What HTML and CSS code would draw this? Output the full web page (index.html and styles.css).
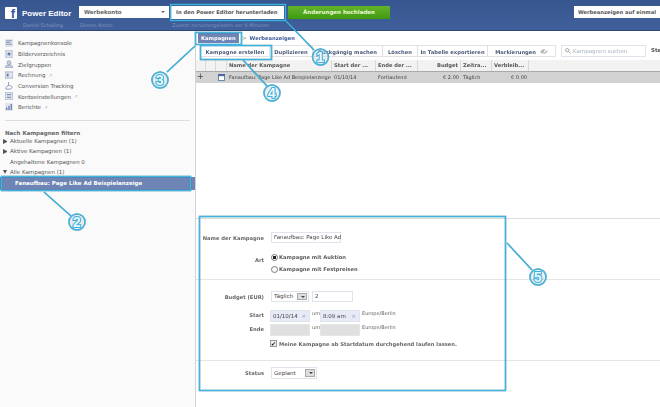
FILE: index.html
```html
<!DOCTYPE html>
<html lang="de">
<head>
  <meta charset="UTF-8" />
  <title>Power Editor</title>
  <link rel="stylesheet" href="styles.css">
</head>
<body>
  <header class="topbar">
    <div class="brand">
      <div class="fb-logo">f</div>
      <div class="brand-text">
        <div class="brand-name">Power Editor</div>
        <div class="top-note">Daniel Schalling</div>
      </div>
    </div>
    <div class="account">
      <div class="account-select">Werbekonto <span class="caret"></span></div>
      <div class="top-note">Dieses Konto</div>
    </div>
    <div class="download">
      <div class="top-btn">In den Power Editor herunterladen</div>
      <div class="top-note">Zuletzt heruntergeladen vor 4 Minuten</div>
    </div>
    <div class="upload-btn">Änderungen hochladen</div>
    <div class="top-btn bulk-btn">Werbeanzeigen auf einmal</div>
  </header>

  <div class="layout">
    <aside class="sidebar">
      <ul class="side-nav">
        <li><svg viewBox="0 0 9 9"><path d="M0 0h9v9H0z" fill="#dfe4ee"/><path d="M1 2h7M1 4h5M1 6h7" stroke="#7f8fae"/></svg>Kampagnenkonsole</li>
        <li><svg viewBox="0 0 9 9"><path d="M1 0h7v9H1z" fill="#dfe4ee" stroke="#93a0bb" stroke-width=".7"/><path d="M3 3h3v3H3z" fill="#5f76a6"/></svg>Bilderverzeichnis</li>
        <li><svg viewBox="0 0 9 9"><circle cx="4.5" cy="3" r="2.2" fill="#c6cfe0" stroke="#7f8fae" stroke-width=".7"/><path d="M0 9c.5-3 2-3.5 4.500-3.500S8.500 6 9 9z" fill="#c6cfe0" stroke="#7f8fae" stroke-width=".7"/></svg>Zielgruppen</li>
        <li><svg viewBox="0 0 9 9"><path d="M0 1h9v7H0z" fill="#dfe4ee" stroke="#8494b3" stroke-width=".7"/><path d="M2 3h2v3H2z" fill="#5f76a6"/></svg>Rechnung <span class="ext">↗</span></li>
        <li><svg viewBox="0 0 9 9"><path d="M4 0v4M1 8c0-3 2-4 4-4s3 1 3 2-2 2-3 2z" fill="none" stroke="#8494b3"/></svg>Conversion Tracking</li>
        <li><svg viewBox="0 0 9 9"><path d="M0 0h9v9H0z" fill="#dfe4ee" stroke="#8494b3" stroke-width=".7"/><path d="M2 3h5M2 6h5" stroke="#5f76a6"/></svg>Kontoeinstellungen <span class="ext">↗</span></li>
        <li><svg viewBox="0 0 9 9"><path d="M0 0h9v9H0z" fill="#dfe4ee"/><path d="M2 5v3M4.500 3v5M7 1v7" stroke="#4f6aa3" stroke-width="1.200"/></svg>Berichte <span class="ext">↗</span></li>
      </ul>

      <h3 class="filter-title">Nach Kampagnen filtern</h3>
      <ul class="filter-tree">
        <li><span class="arrow right"></span>Aktuelle Kampagnen (1)</li>
        <li><span class="arrow right"></span>Aktive Kampagnen (1)</li>
        <li><span class="arrow none"></span>Angehaltene Kampagnen 0</li>
        <li><span class="arrow down"></span>Alle Kampagnen (1)</li>
      </ul>
      <div class="selected-campaign">Fanaufbau: Page Like Ad Beispielanzeige</div>
    </aside>

    <main class="content">
      <nav class="crumbs">
        <span class="crumb-active">Kampagnen</span>
        <span class="crumb-sep">&gt;</span>
        <span class="crumb-link">Werbeanzeigen</span>
      </nav>

      <div class="toolbar">
        <div class="tool-group">
          <span class="tool w-create">Kampagne erstellen</span>
          <span class="tool w-dup">Duplizieren</span>
          <span class="tool w-undo">Rückgängig machen</span>
          <span class="tool w-del">Löschen</span>
          <span class="tool w-export">In Tabelle exportieren</span>
          <span class="tool w-tags">Markierungen
            <svg class="tag-icon" viewBox="0 0 12 7"><path d="M0 4l4-4h4L5 6 3 7zM5 7l5-5 2 1-4 4z" fill="#b9b9b9"/></svg>
          </span>
        </div>
        <div class="search">
          <svg viewBox="0 0 8 8"><circle cx="3" cy="3" r="2.200" fill="none" stroke="#8a8a8a"/><path d="M5 5l2.500 2.500" stroke="#8a8a8a"/></svg>
          Kampagnen suchen
        </div>
        <span class="status-cut">Sta</span>
      </div>

      <div class="table">
        <div class="row head">
          <span class="c c-a"></span><span class="c c-b"></span><span class="c c-c"></span>
          <span class="c c-name">Name der Kampagne</span>
          <span class="c c-start">Start der ...</span>
          <span class="c c-end">Ende der ...</span>
          <span class="c c-budget num">Budget</span>
          <span class="c c-time">Zeitra...</span>
          <span class="c c-left">Verbleib...</span>
        </div>
        <div class="row body">
          <span class="c c-a plus">+</span><span class="c c-b"></span>
          <span class="c c-c"><svg viewBox="0 0 8 8"><path d="M.5.5h7v7h-7z" fill="#fff" stroke="#4f6aa3"/><path d="M0 0h8v2.500H0z" fill="#4f6aa3"/></svg></span>
          <span class="c c-name">Fanaufbau: Page Like Ad Beispielanzeige</span>
          <span class="c c-start">01/10/14</span>
          <span class="c c-end">Fortlaufend</span>
          <span class="c c-budget num">€ 2.00</span>
          <span class="c c-time">Täglich</span>
          <span class="c c-left num">€ 0.00</span>
        </div>
      </div>

      <section class="details">
        <div class="form-block first">
          <div class="field">
            <label class="lbl">Name der Kampagne</label>
            <div class="input name-input">Fanaufbau: Page Like Ad</div>
          </div>
          <div class="field art">
            <label class="lbl">Art</label>
            <div class="radios">
              <div class="radio-row"><span class="radio on"></span>Kampagne mit Auktion</div>
              <div class="radio-row"><span class="radio"></span>Kampagne mit Festpreisen</div>
            </div>
          </div>
        </div>

        <div class="form-block second">
          <div class="field budget">
            <label class="lbl">Budget (EUR)</label>
            <div class="input select-input w-daily">Täglich <span class="sel-btn"></span></div>
            <div class="input budget-input">2</div>
          </div>
          <div class="field date">
            <label class="lbl">Start</label>
            <div class="input date-input">01/10/14 <span class="clear">×</span></div>
            <span class="um">um</span>
            <div class="input date-input">8:09 am <span class="clear">×</span></div>
            <span class="tz">Europe/Berlin</span>
          </div>
          <div class="field date">
            <label class="lbl">Ende</label>
            <div class="input date-input off"></div>
            <span class="um">um</span>
            <div class="input date-input off"></div>
            <span class="tz">Europe/Berlin</span>
          </div>
          <div class="field check">
            <label class="lbl"></label>
            <span class="checkbox">✔</span>
            <span class="check-text">Meine Kampagne ab Startdatum durchgehend laufen lassen.</span>
          </div>
        </div>

        <div class="form-block third">
          <div class="field">
            <label class="lbl">Status</label>
            <div class="input select-input w-status">Geplant <span class="sel-btn"></span></div>
          </div>
        </div>
      </section>
    </main>
  </div>

  <!-- Tutorial callouts drawn over the page -->
  <svg class="callouts" viewBox="0 0 660 407" aria-hidden="true">
    <g class="boxes">
      <rect x="170.500" y="4.500" width="115" height="16"/>
      <rect x="1.500" y="176.500" width="189" height="14"/>
      <rect x="195.500" y="32.500" width="46" height="12"/>
      <rect x="200.500" y="45.500" width="71" height="14"/>
      <rect x="199.500" y="216.500" width="306" height="174"/>
    </g>
    <g class="leaders">
      <path d="M286 21L314 50"/>
      <path d="M44 192L71 216"/>
      <path d="M195 46L167 72"/>
      <path d="M243 60L267 86"/>
      <path d="M507 243L532 270"/>
    </g>
    <g class="badges">
      <circle cx="320.500" cy="57" r="8"/><text x="320.500" y="62">1</text>
      <circle cx="77" cy="222" r="8"/><text x="77" y="227">2</text>
      <circle cx="160" cy="80" r="8"/><text x="160" y="85">3</text>
      <circle cx="272" cy="93" r="8"/><text x="272" y="98">4</text>
      <circle cx="538" cy="277" r="8"/><text x="538" y="282">5</text>
    </g>
  </svg>
</body>
</html>
```

FILE: styles.css
```css
/* Reset and base */
* {
  box-sizing: border-box;
  margin: 0;
  padding: 0;
}
html, body {
  height: 407px;
  overflow: hidden;
}
body {
  position: relative;
  background: #fff;
  color: #444;
  font-family: "DejaVu Sans", Verdana, sans-serif;
  font-size: 5.5px;
  filter: blur(.3px); /* the reference is a scaled down capture */
}
ul {
  list-style: none;
}

/* Blue top bar */
.topbar {
  height: 31px;
  display: flex;
  align-items: flex-start;
  padding: 6px 0 0 5px;
  background: linear-gradient(#37568f, #41609b);
  border-bottom: 1px solid #2c4678;
  overflow: hidden;
  white-space: nowrap;
}
.topbar > * {
  flex: none;
}
.brand {
  display: flex;
  width: 74px;
}
.fb-logo {
  width: 12px;
  height: 12px;
  margin-top: 1px;
  background: #fff;
  color: #3b5998;
  border-radius: 1px;
  font: bold 13px/14px "Liberation Sans", sans-serif;
  text-align: right;
  padding-right: 2px;
}
.brand-text {
  margin-left: 5px;
}
.brand-name {
  color: #fff;
  font: bold 8px/10px "Liberation Sans", sans-serif;
  margin: 3px 0 2px;
}
.top-note {
  color: #7e93bf;
  font-size: 5px;
  line-height: 8px;
  margin-top: 3px;
  padding-left: 1px;
}
.brand-text .top-note {
  margin-top: 1px;
}
.account {
  width: 92px;
}
.account-select {
  width: 90px;
  height: 12px;
  background: #fff;
  color: #666;
  font-weight: bold;
  font-size: 5.5px;
  line-height: 12px;
  padding-left: 5px;
  position: relative;
}
.caret {
  position: absolute;
  right: 4px;
  top: 5px;
  border: 2px solid transparent;
  border-top-color: #666;
}
.top-btn {
  height: 12px;
  background: #fff;
  color: #555;
  font-weight: bold;
  font-size: 5.2px;
  line-height: 12px;
  padding: 0 5px;
}
.download {
  width: 117px;
}
.download .top-btn {
  width: 113px;
  height: 13px;
  line-height: 13px;
}
.download .top-note {
  margin-top: 2px;
}
.upload-btn {
  width: 102px;
  height: 13px;
  background: linear-gradient(#63b32a, #3f9a10);
  color: #e9f8d2;
  font-weight: bold;
  font-size: 5.5px;
  line-height: 13px;
  text-align: center;
}
.bulk-btn {
  margin-left: 184px;
  width: 86px;
  padding: 0 0 0 4px;
}

/* Two columns under the bar */
.layout {
  display: flex;
  height: 376px;
}
.sidebar {
  width: 196px;
  flex: none;
  background: #fafafa;
  border-right: 1px solid #d4d4d4;
  padding-top: 7px;
}
.side-nav {
  margin: 0 5px;
  padding-bottom: 7px;
  border-bottom: 1px solid #dedede;
}
.side-nav li {
  display: flex;
  align-items: center;
  height: 10.7px;
  padding-left: 13px;
  position: relative;
  color: #555;
  white-space: nowrap;
}
.side-nav svg {
  position: absolute;
  left: 0;
  top: 1px;
  width: 8px;
  height: 8px;
}
.ext {
  color: #aaa;
  margin-left: 3px;
  font-size: 4.5px;
}
.filter-title {
  color: #666;
  font-size: 5.5px;
  line-height: 8px;
  margin: 8px 0 0 5px;
}
.filter-tree {
  margin: -1px 0 0 3px;
}
.filter-tree li {
  display: flex;
  align-items: center;
  height: 10.4px;
  color: #555;
}
.arrow {
  width: 7px;
  flex: none;
  height: 5px;
}
.arrow.right {
  width: 4px;
  margin-right: 3px;
  border-left: 4px solid #555;
  border-top: 2.500px solid transparent;
  border-bottom: 2.500px solid transparent;
}
.arrow.down {
  width: 4px;
  margin-right: 3px;
  border-top: 4px solid #555;
  border-left: 2.500px solid transparent;
  border-right: 2.500px solid transparent;
}
.selected-campaign {
  height: 13px;
  background: #6d84b4;
  color: #fff;
  font-weight: bold;
  line-height: 12px;
  padding-left: 15px;
  white-space: nowrap;
}

/* Right side */
.content {
  flex: 1;
  min-width: 0;
  overflow: hidden;
}
.crumbs {
  height: 13px;
  display: flex;
  align-items: center;
  padding-left: 2px;
  white-space: nowrap;
}
.crumb-active {
  background: #6d84b4;
  color: #fff;
  font-weight: bold;
  font-size: 5.2px;
  padding: 0 3px;
  height: 10px;
  line-height: 10px;
  width: 41px;
  white-space: nowrap;
}
.crumb-sep {
  color: #8c8c8c;
  margin: 0 3px;
}
.crumb-link {
  color: #3b5998;
  font-weight: bold;
  font-size: 5.2px;
}
.toolbar {
  display: flex;
  align-items: flex-start;
  height: 16px;
  margin-left: 4px;
  padding-top: 1px;
  white-space: nowrap;
}
.tool-group {
  display: flex;
  flex: none;
}
.tool {
  height: 12px;
  line-height: 12px;
  text-align: center;
  color: #4c5a78;
  font-weight: bold;
  font-size: 5.2px;
  border: 1px solid #e2e2e2;
  border-left: none;
  background: #fff;
  display: block;
}
.w-create { width: 70px; border-left: 1px solid #e2e2e2; }
.w-dup { width: 43px; }
.w-undo { width: 70px; }
.w-del { width: 35px; }
.w-export { width: 70px; }
.w-tags { width: 68px; }
.tag-icon {
  width: 8px;
  height: 5px;
  margin-left: 2px;
}
.search {
  width: 85px;
  height: 12px;
  margin: 0 0 0 5px;
  border: 1px solid #dfe3ec;
  color: #a7b0c0;
  line-height: 10px;
  padding-left: 3px;
  flex: none;
  display: flex;
  align-items: center;
  gap: 2px;
}
.search svg {
  width: 6px;
  height: 6px;
}
.status-cut {
  margin-left: 5px;
  font-weight: bold;
  color: #555;
  line-height: 10px;
}

/* Table */
.table {
  margin-bottom: 135px;
}
.row {
  display: flex;
  white-space: nowrap;
}
.row.head {
  height: 12px;
  background: #f2f2f2;
  border-bottom: 1px solid #a9a9a9;
  font-weight: bold;
  color: #555;
  line-height: 11px;
  font-size: 5.2px;
}
.row.head .c {
  border-right: 1px solid #d9d9d9;
}
.row.body {
  height: 11px;
  background: #d2d2d2;
  line-height: 10px;
  color: #444;
  font-size: 5px;
}
.c {
  padding: 0 2px;
  overflow: hidden;
  flex: none;
}
.c-a { width: 10px; }
.c-b { width: 10px; }
.c-c { width: 11px; }
.c-name { width: 105px; }
.c-start { width: 44px; }
.c-end { width: 42px; }
.c-budget { width: 43px; }
.c-time { width: 31px; }
.c-left { width: 37px; }
.num { text-align: right; }
.plus {
  font-size: 8px;
  padding: 0 1px;
  line-height: 10px;
}
.c-c svg {
  width: 7px;
  height: 7px;
  margin-top: 2px;
  display: block;
}

/* Detail form */
.details {
  border-top: 1px solid #dedede;
}
.form-block {
  border-bottom: 1px solid #e4e4e4;
}
.form-block.first {
  height: 61px;
  padding-top: 13px;
}
.form-block.second {
  height: 81px;
  padding-top: 11px;
}
.form-block.third {
  border-bottom: none;
  padding-top: 6px;
}
.field {
  display: flex;
  align-items: center;
  min-height: 11px;
  margin-bottom: 4px;
  white-space: nowrap;
}
.lbl {
  width: 68px;
  flex: none;
  margin-right: 7px;
  text-align: right;
  font-weight: bold;
  color: #666;
  font-size: 5.2px;
}
.input {
  height: 11px;
  line-height: 9px;
  border: 1px solid #dfe3ec;
  padding-left: 2px;
  color: #444;
  background: #fff;
  position: relative;
}
.name-input {
  width: 70px;
}
.field.art {
  margin-top: 8px;
}
.field.art .lbl {
  padding-bottom: 6px;
}
.radio-row {
  display: flex;
  align-items: center;
  height: 12px;
  font-weight: bold;
  color: #5a5a5a;
  font-size: 5.2px;
}
.radio {
  width: 7px;
  height: 7px;
  border: 1px solid #777;
  border-radius: 50%;
  background: #fff;
  margin-right: 1px;
}
.radio.on {
  background: radial-gradient(circle, #222 0 1.500px, #fff 2px);
}
.select-input {
  margin-right: 3px;
}
.w-daily { width: 38px; }
.w-status { width: 46px; height: 12px; line-height: 10px; }
.sel-btn {
  position: absolute;
  right: 1px;
  top: 1px;
  width: 10px;
  height: 7px;
  background: #ddd;
  border: 1px solid #aaa;
}
.sel-btn::after {
  content: "";
  position: absolute;
  left: 2.500px;
  top: 2px;
  border: 2px solid transparent;
  border-top-color: #444;
}
.w-status .sel-btn {
  height: 8px;
}
.budget-input {
  width: 41px;
}
.field.budget {
  margin-bottom: 8px;
}
.field.date {
  margin-bottom: 2px;
  align-items: flex-start;
}
.field.date .lbl {
  line-height: 11px;
}
.date-input {
  width: 40px;
  height: 12px;
  line-height: 10px;
  margin-left: -1px;
  margin-right: 1px;
  background: #e6ebf7;
  border-color: #dfe3ec;
}
.date-input.off {
  background: #e0e0e0;
  border-color: #e6e6e6;
}
.clear {
  position: absolute;
  right: 3px;
  top: 0;
  color: #7f92bd;
}
.um {
  width: 10px;
  text-align: center;
  color: #666;
  font-size: 5px;
  line-height: 7px;
}
.tz {
  margin-left: 1px;
  color: #666;
  font-size: 5px;
  line-height: 7px;
}
.field.check {
  margin-top: 1px;
}
.checkbox {
  width: 7px;
  height: 7px;
  border: 1px solid #999;
  background: #eee;
  color: #111;
  font-size: 6px;
  line-height: 5px;
  margin-left: -1px;
  margin-right: 2px;
}
.check-text {
  font-weight: bold;
  color: #666;
  font-size: 5.2px;
}

/* Tutorial callouts */
.callouts {
  position: absolute;
  left: 0;
  top: 0;
  width: 660px;
  height: 407px;
  filter: drop-shadow(.5px .5px .6px rgba(0, 0, 0, .35));
}
.boxes rect {
  fill: none;
  stroke: #3fb4e0;
  stroke-width: 1.500;
}
.leaders path {
  fill: none;
  stroke: #3fb4e0;
  stroke-width: 1.500;
}
.badges circle {
  fill: #fff;
  fill-opacity: .3;
  stroke: #3fb4e0;
  stroke-width: 1.500;
}
.badges text {
  font: bold 14px "Liberation Sans", sans-serif;
  text-anchor: middle;
  fill: #eaf7fc;
  stroke: #3fb4e0;
  stroke-width: 2;
  paint-order: stroke;
}
```
